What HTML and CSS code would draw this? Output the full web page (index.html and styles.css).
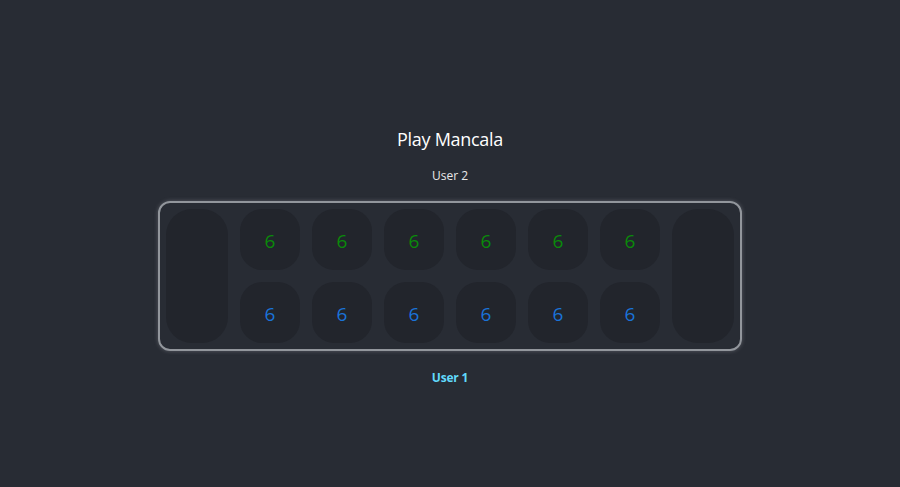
FILE: index.html
```html
<!DOCTYPE html>
<html>
<head>
<meta charset="utf-8">
<link rel="stylesheet" href="styles.css">
</head>
<body>
<main class="app">
  <h1 class="title">Play Mancala</h1>
  <div class="player">User 2</div>
  <div class="board">
    <div class="store"></div>
    <div class="pits">
      <div class="pit top">6</div>
      <div class="pit top">6</div>
      <div class="pit top">6</div>
      <div class="pit top">6</div>
      <div class="pit top">6</div>
      <div class="pit top">6</div>
      <div class="pit bottom">6</div>
      <div class="pit bottom">6</div>
      <div class="pit bottom">6</div>
      <div class="pit bottom">6</div>
      <div class="pit bottom">6</div>
      <div class="pit bottom">6</div>
    </div>
    <div class="store"></div>
  </div>
  <div class="player active">User 1</div>
</main>
</body>
</html>
```
FILE: styles.css
```css
html, body {
  margin: 0;
  padding: 0;
  background: #282c34;
  height: 100%;
}
body {
  font-family: "Open Sans", "Noto Sans", sans-serif;
  color: #ffffff;
}
.app {
  display: flex;
  flex-direction: column;
  align-items: center;
  padding-top: 127px;
}
.title {
  margin: 0;
  font-size: 18px;
  line-height: 24px;
  font-weight: 400;
  letter-spacing: -0.3px;
}
.player {
  font-size: 12px;
  line-height: 16px;
  margin-top: 17px;
  color: #e8e8e8;
}
.player.active {
  margin-top: 19px;
  font-size: 12px;
  font-weight: 700;
  letter-spacing: -0.2px;
  color: #61dafb;
}
.board {
  margin-top: 17px;
  box-sizing: border-box;
  width: 584px;
  height: 150px;
  border: 2px solid #92969c;
  border-radius: 12px;
  box-shadow: 0 0 4px rgba(200, 200, 210, 0.3);
  padding: 6px;
  display: flex;
  gap: 12px;
}
.store {
  width: 62px;
  background: #22252c;
  border-radius: 26px;
}
.pits {
  display: grid;
  grid-template-columns: repeat(6, 60px);
  grid-template-rows: 61px 61px;
  gap: 12px;
}
.pit {
  background: #22252c;
  border-radius: 22px;
  display: flex;
  align-items: center;
  justify-content: center;
  font-size: 19px;
  padding-top: 2px;
  box-sizing: border-box;
}
.pit.top { color: #0a8a0a; }
.pit.bottom { color: #1a73d9; }
```
